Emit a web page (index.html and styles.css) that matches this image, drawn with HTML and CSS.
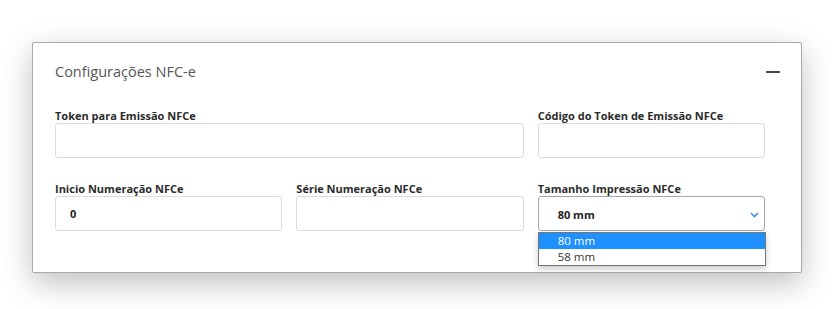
FILE: index.html
```html
<!DOCTYPE html>
<html lang="pt-BR">
<head>
    <meta charset="UTF-8">
    <meta name="viewport" content="width=device-width, initial-scale=1.0">
    <title>Configurações NFC-e</title>
    <link rel="stylesheet" href="styles.css">
</head>
<body>
    <div class="page">
        <section class="card">
            <div class="card-header">
                <h2>Configurações NFC-e</h2>
                <span class="collapse-btn"></span>
            </div>

            <div class="card-body">
                <div class="form-grid">
                    <div class="field span-2">
                        <label>Token para Emissão NFCe</label>
                        <input type="text" class="form-control">
                    </div>
                    <div class="field">
                        <label>Código do Token de Emissão NFCe</label>
                        <input type="text" class="form-control">
                    </div>

                    <div class="field">
                        <label>Inicio Numeração NFCe</label>
                        <input type="text" class="form-control" value="0">
                    </div>
                    <div class="field">
                        <label>Série Numeração NFCe</label>
                        <input type="text" class="form-control">
                    </div>
                    <div class="field">
                        <label>Tamanho Impressão NFCe</label>
                        <div class="select">
                            <div class="select-box">
                                <span>80 mm</span>
                                <svg class="chevron" width="9" height="6" viewBox="0 0 9 6">
                                    <path d="M1 1 L4.5 4.5 L8 1" fill="none" stroke="#3b8ee8" stroke-width="1.6"/>
                                </svg>
                            </div>
                            <ul class="select-list">
                                <li class="selected">80 mm</li>
                                <li>58 mm</li>
                            </ul>
                        </div>
                    </div>
                </div>
            </div>
        </section>
    </div>
</body>
</html>
```

FILE: styles.css
```css
* {
    margin: 0;
    padding: 0;
    box-sizing: border-box;
    font-family: 'Open Sans', 'Noto Sans', sans-serif;
}

html, body {
    min-height: 100%;
}

body {
    background-color: #ffffff;
    color: #333;
}

.page {
    padding: 42px 35px 40px 32px;
}

.card {
    width: 770px;
    background-color: white;
    border: 1px solid #a9a9a9;
    border-radius: 2px;
    box-shadow: 0 10px 30px rgba(0, 0, 0, 0.25);
}

.card-header {
    display: flex;
    justify-content: space-between;
    align-items: flex-start;
    padding: 19px 21px 0 22px;
    height: 56px;
}

.card-header h2 {
    font-size: 14.5px;
    font-weight: 400;
    color: #555;
    line-height: 20px;
}

.collapse-btn {
    display: block;
    width: 14px;
    height: 2px;
    margin-top: 9px;
    background-color: #4a4a44;
}

.card-body {
    padding: 9px 36px 41px 22px;
}

.form-grid {
    display: grid;
    grid-template-columns: repeat(3, 1fr);
    column-gap: 14px;
    row-gap: 23px;
}

.span-2 {
    grid-column: span 2;
}

.field label {
    display: block;
    font-size: 11px;
    font-weight: 700;
    line-height: 15px;
    color: #2b2b2b;
}

.form-control {
    display: block;
    width: 100%;
    height: 35px;
    border: 1px solid #dcdcdc;
    border-radius: 3px;
    padding: 0 14px;
    font-size: 11px;
    font-weight: 700;
    color: #222;
    background: white;
}

.select {
    position: relative;
}

.select-box {
    display: flex;
    justify-content: space-between;
    align-items: center;
    height: 35px;
    border: 1px solid #a8a8a8;
    border-radius: 3px;
    padding: 2px 5px 0 19px;
    font-size: 11px;
    font-weight: 700;
    color: #222;
}

.chevron {
    margin-top: 1px;
}

.select-list {
    position: absolute;
    top: 36px;
    left: 0;
    width: 228px;
    list-style: none;
    background: white;
    border: 1px solid #767676;
    box-shadow: 0 3px 6px rgba(0, 0, 0, 0.2);
}

.select-list li {
    height: 16px;
    line-height: 16px;
    padding-left: 19px;
    font-size: 11.5px;
    color: #333;
}

.select-list li.selected {
    background-color: #1e90ff;
    color: white;
}
```
